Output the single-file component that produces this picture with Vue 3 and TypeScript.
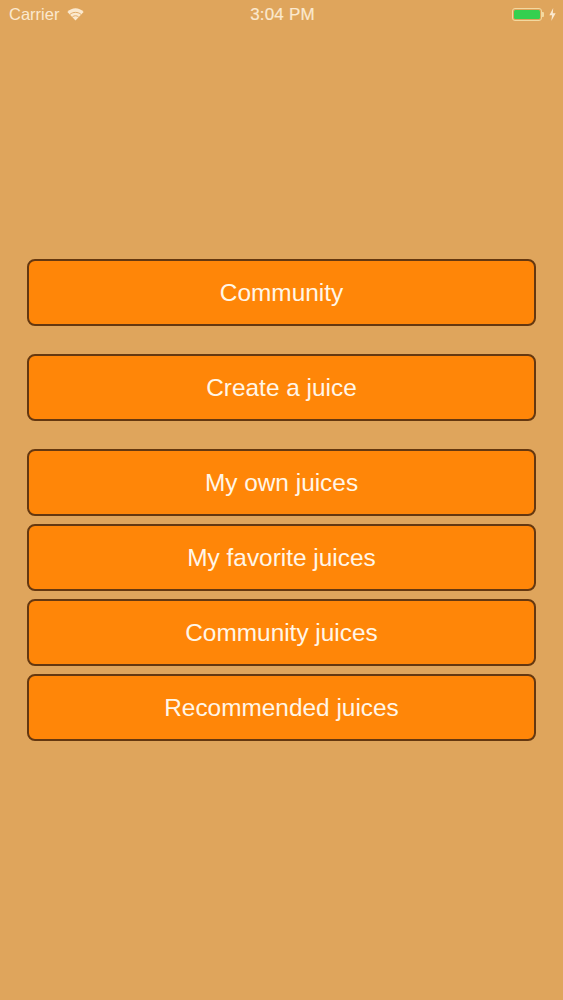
<script setup lang="ts">
const groups: string[][] = [
  ['Community'],
  ['Create a juice'],
  ['My own juices', 'My favorite juices', 'Community juices', 'Recommended juices'],
]
</script>

<template>
  <div class="screen">
    <header class="status">
      <div class="left">
        <span class="carrier">Carrier</span>
        <svg class="wifi" width="17" height="13" viewBox="0 0 17 13">
          <path d="M8.5 12.5 L0.4 4 C5 -0.9 12 -0.9 16.6 4 Z" fill="#fbe9cf" />
          <path d="M3 6.4 C6 3.7 11 3.7 14 6.4" fill="none" stroke="#dfa55c" stroke-width="0.9" />
          <path d="M5.4 8.9 C7.1 7.4 9.9 7.4 11.6 8.9" fill="none" stroke="#dfa55c" stroke-width="0.9" />
        </svg>
      </div>
      <span class="time">3:04 PM</span>
      <div class="right">
        <span class="battery"><span class="fill"></span></span>
        <span class="nub"></span>
        <svg class="bolt" width="7" height="13" viewBox="0 0 6 11">
          <path d="M3.6 0 L0.3 6.2 H2.6 L2 11 L5.7 4.4 H3.3 Z" fill="#fbe9cf" />
        </svg>
      </div>
    </header>
    <main class="menu">
      <div v-for="(group, i) in groups" :key="i" class="group">
        <button v-for="label in group" :key="label" class="btn" type="button">{{ label }}</button>
      </div>
    </main>
  </div>
</template>

<style>
html, body { margin: 0; background: #dfa55c; }
</style>

<style scoped>
.screen {
  width: 563px;
  height: 1000px;
  background: #dfa55c;
  font-family: "Liberation Sans", Arial, sans-serif;
  overflow: hidden;
}
.status {
  height: 29px;
  display: grid;
  grid-template-columns: 1fr auto 1fr;
  align-items: center;
  padding: 0 7px 0 9px;
  color: #fbe9cf;
}
.left { display: flex; align-items: center; gap: 8px; }
.carrier { font-size: 16.5px; }
.time { font-size: 17px; letter-spacing: 0.2px; -webkit-text-stroke: 0.2px #fbe9cf; }
.right { display: flex; align-items: center; justify-content: flex-end; }
.battery {
  width: 30px;
  height: 13px;
  box-sizing: border-box;
  border: 1px solid #f3d9a0;
  border-radius: 3px;
  padding: 1px;
  display: flex;
}
.fill { flex: 1; background: #35d04f; border-radius: 1.5px; }
.nub { width: 2px; height: 5px; background: #f3d9a0; border-radius: 0 1px 1px 0; }
.bolt { margin-left: 5px; }
.menu {
  margin-top: 230px;
  padding: 0 27px;
  display: flex;
  flex-direction: column;
  gap: 28px;
}
.group { display: flex; flex-direction: column; gap: 8px; }
.btn {
  height: 67px;
  width: 100%;
  box-sizing: border-box;
  background: #ff8608;
  border: 2px solid #653810;
  border-radius: 8px;
  color: #fff6e8;
  font-family: inherit;
  font-size: 24.4px;
  padding: 0;
}
</style>
